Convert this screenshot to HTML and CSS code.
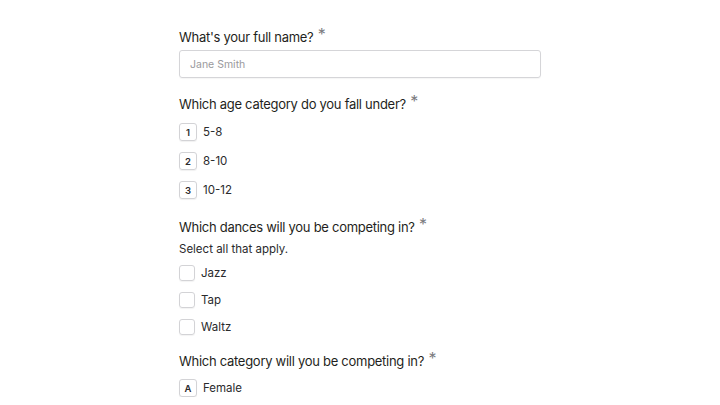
FILE: index.html
```html
<!DOCTYPE html>
<html lang="en">
<head>
<meta charset="utf-8">
<title>Dance Competition Form</title>
<link rel="stylesheet" href="styles.css">
</head>
<body>
<main class="form">
  <section class="question">
    <h2 class="label">What's your full name? <span class="req">*</span></h2>
    <div class="input">Jane Smith</div>
  </section>

  <section class="question q-age">
    <h2 class="label">Which age category do you fall under? <span class="req">*</span></h2>
    <ul class="options">
      <li class="option"><span class="key">1</span><span>5-8</span></li>
      <li class="option"><span class="key">2</span><span>8-10</span></li>
      <li class="option"><span class="key">3</span><span>10-12</span></li>
    </ul>
  </section>

  <section class="question q-dances">
    <h2 class="label">Which dances will you be competing in? <span class="req">*</span></h2>
    <p class="hint">Select all that apply.</p>
    <ul class="checks">
      <li class="check"><span class="box"></span><span>Jazz</span></li>
      <li class="check"><span class="box"></span><span>Tap</span></li>
      <li class="check"><span class="box"></span><span>Waltz</span></li>
    </ul>
  </section>

  <section class="question q-category">
    <h2 class="label">Which category will you be competing in? <span class="req">*</span></h2>
    <ul class="options">
      <li class="option"><span class="key">A</span><span>Female</span></li>
    </ul>
  </section>
</main>
</body>
</html>
```

FILE: styles.css
```css
* { box-sizing: border-box; }
html, body { margin: 0; padding: 0; background: #ffffff; }
body {
  font-family: Inter, "Noto Sans", "Liberation Sans", sans-serif;
  color: #262628;
}
.form {
  width: 362px;
  margin: 0 auto;
  padding-top: 26px;
  display: flex;
  flex-direction: column;
  gap: 15px;
}
.question { display: flex; flex-direction: column; }
.q-dances { margin-top: 2px; }
.q-category { margin-top: 0; }
.label {
  margin: 0;
  font-size: 13px;
  font-weight: 400;
  letter-spacing: -0.28px;
  line-height: 20px;
  color: #1f1f21;
}
.req {
  color: #7c7c7f;
  font-weight: 400;
  font-size: 16px;
  letter-spacing: 0;
  position: relative;
  top: -2px;
  margin-left: 1px;
}
.input {
  margin-top: 3px;
  height: 28px;
  border: 1px solid #d5d5d8;
  border-radius: 3px;
  padding: 0 10px;
  display: flex;
  align-items: center;
  font-size: 10.5px;
  color: #9a9a9d;
  box-shadow: 0 1px 1px rgba(0,0,0,0.04);
}
.options, .checks {
  list-style: none;
  margin: 0;
  padding: 0;
  display: flex;
  flex-direction: column;
}
.options { margin-top: 8px; gap: 11px; }
.q-age .options { margin-top: 9px; }
.option, .check {
  display: flex;
  align-items: center;
  font-size: 11.5px;
  color: #2a2a2c;
}
.option { gap: 6px; height: 18px; }
.key {
  width: 18px;
  height: 18px;
  border: 1px solid #d3d3d6;
  border-radius: 3px;
  display: flex;
  align-items: center;
  justify-content: center;
  font-size: 9.5px;
  font-weight: 600;
  color: #2a2a2c;
  box-shadow: 0 1px 1px rgba(0,0,0,0.06);
}
.hint {
  margin: 4px 0 0;
  font-size: 11.5px;
  line-height: 16px;
  color: #2a2a2c;
}
.checks { margin-top: 8px; gap: 11px; }
.check { gap: 6px; height: 16px; }
.box {
  width: 16px;
  height: 16px;
  border: 1px solid #d3d3d6;
  border-radius: 3px;
  box-shadow: 0 1px 1px rgba(0,0,0,0.05);
}
```
